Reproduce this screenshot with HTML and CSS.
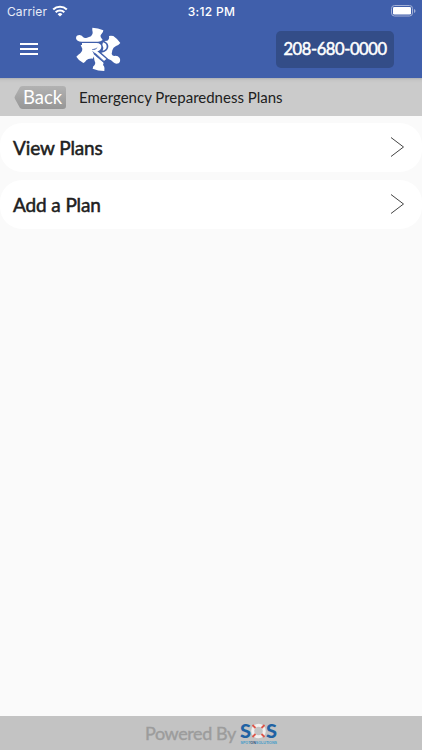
FILE: index.html
```html
<!DOCTYPE html>
<html lang="en">
<head>
    <meta charset="UTF-8">
    <meta name="viewport" content="width=device-width, initial-scale=1.0">
    <title>Emergency Preparedness Plans</title>
    <link rel="stylesheet" href="styles.css">
</head>
<body>
    <header>
        <div class="status-bar">
            <div class="carrier">
                <span>Carrier</span>
                <svg class="wifi" viewBox="0 0 16 12">
                    <path d="M1.2 4.6a9.7 9.7 0 0 1 13.6 0M3.7 7.2a6.2 6.2 0 0 1 8.6 0" fill="none" stroke="#fff" stroke-width="2.1"/>
                    <path d="M8 11.6L5.6 9.2a3.4 3.4 0 0 1 4.8 0z" fill="#fff"/>
                </svg>
            </div>
            <span class="time">3:12 PM</span>
            <svg class="battery" viewBox="0 0 25 12">
                <rect x="0.5" y="0.5" width="21" height="10.5" rx="3" fill="none" stroke="#a3b0d6"/>
                <rect x="2" y="2" width="18" height="7.5" rx="1.3" fill="#fff"/>
                <path d="M23 4v4q1.5-.7 1.5-2T23 4z" fill="#a3b0d6"/>
            </svg>
        </div>
        <div class="nav-bar">
            <button class="menu-btn" aria-label="Menu"><span></span><span></span><span></span></button>
            <svg class="logo" viewBox="0 0 168 162">
                <g fill="#fff">
                    <path d="M67 17Q84 17 100 25Q100 31 95 35Q90 39 92 45L98 54Q92 59 84 59H38Q20 60 18 49Q18 39 29 39Q37 40 39 45Q43 49 51 47L63 43Q69 38 68 31Q66 24 67 17Z"/>
                    <path d="M32 69H76Q85 72 79 79L66 82Q65 86 70 92L73 101L68 110Q54 109 49 115Q44 123 40 123Q26 116 19 104Q25 98 31 94Q38 87 37 80Z"/>
                    <path d="M36 63H80Q94 64 94 75Q93 85 82 88L109 111L101 118L72 91L62 83H75Q82 80 82 75Q80 71 75 71H36Z"/>
                    <path d="M71 97L101 122Q97 129 102 133Q105 139 103 147Q84 147 68 140Q68 133 74 129Q78 123 73 114Z"/>
                    <path d="M117 42Q122 40 130 42Q142 50 151 63Q145 70 138 72Q129 76 127 85L125 96Q127 102 133 102Q143 100 149 108Q153 118 146 124Q137 128 130 121Q124 114 115 111L94 92Q113 89 115 75Q116 63 103 57L112 56Q119 52 117 42Z"/>
                    <path d="M99 61Q110 64 110 74Q109 83 98 86Q102 76 97 68Z"/>
                </g>
                <path d="M76 94L102 118" fill="none" stroke="#405fab" stroke-width="2.5"/>
                <path d="M78 101L103 123" fill="none" stroke="#405fab" stroke-width="2" stroke-dasharray="2 1"/>
            </svg>
            <a class="phone" href="tel:208-680-0000">208-680-0000</a>
        </div>
    </header>
    <div class="title-bar">
        <button class="back-btn">
            <svg viewBox="0 0 53 25" preserveAspectRatio="none">
                <defs>
                    <linearGradient id="backFill" x1="0" y1="0" x2="0" y2="1">
                        <stop offset="0" stop-color="#b2b2b2"/>
                        <stop offset="1" stop-color="#969696"/>
                    </linearGradient>
                </defs>
                <path d="M6 2Q7 1 9 1H49Q52 1 52 4V21Q52 24 49 24H9Q7 24 6 23L1 14Q0 12.500 1 11Z" fill="url(#backFill)"/>
            </svg>
            <span>Back</span>
        </button>
        <h1>Emergency Preparedness Plans</h1>
    </div>
    <main>
        <a class="plan-row" href="#view">
            <span>View Plans</span>
            <svg class="arrow" viewBox="0 0 14 20"><path d="M1 .5L13.500 10L1 19.500"/></svg>
        </a>
        <a class="plan-row" href="#add">
            <span>Add a Plan</span>
            <svg class="arrow" viewBox="0 0 14 20"><path d="M1 .5L13.500 10L1 19.500"/></svg>
        </a>
    </main>
    <footer>
        <span class="powered">Powered By</span>
        <svg class="sos" viewBox="0 0 38 22">
            <text class="sos-letter" x="0" y="14.500" textLength="11" lengthAdjust="spacingAndGlyphs">S</text>
            <circle cx="18.500" cy="8" r="5.800" fill="none" stroke="#f1efee" stroke-width="3"/>
            <path d="M12.500 2L15.500 5M24.500 2L21.500 5M12.500 14L15.500 11M24.500 14L21.500 11" stroke="#dd5549" stroke-width="1.800"/>
            <text class="sos-letter" x="26" y="14.500" textLength="11" lengthAdjust="spacingAndGlyphs">S</text>
            <text class="sos-name" x="0.500" y="21" textLength="36.500" lengthAdjust="spacingAndGlyphs">SPOT<tspan>ON</tspan>SOLUTIONS</text>
        </svg>
    </footer>
</body>
</html>
```

FILE: styles.css
```css
* {
    box-sizing: border-box;
}

body {
    font-family: Lato, "Liberation Sans", sans-serif;
    margin: 0;
    height: 100vh;
    display: flex;
    flex-direction: column;
    background-color: #fafafa;
    color: #202020;
    overflow: hidden;
}

a {
    text-decoration: none;
    color: inherit;
}

button {
    border: none;
    background: none;
    padding: 0;
    font-family: inherit;
}

header {
    height: 78px;
    flex-shrink: 0;
    background-color: #405fab;
    color: white;
}

.status-bar {
    height: 22px;
    padding: 0 6px 0 7px;
    display: grid;
    grid-template-columns: 1fr auto 1fr;
    align-items: center;
    font-family: Inter, sans-serif;
    font-size: 12px;
}

.carrier {
    display: flex;
    align-items: center;
    gap: 5px;
    letter-spacing: 0.1px;
    color: #e8ecf7;
}

.wifi {
    width: 16px;
    height: 12px;
}

.time {
    font-weight: 500;
    letter-spacing: 0.3px;
}

.battery {
    width: 25px;
    height: 12px;
    justify-self: end;
}

.nav-bar {
    height: 54px;
    display: flex;
    align-items: center;
    padding: 0 28px 0 20px;
}

.menu-btn {
    width: 18px;
    display: flex;
    flex-direction: column;
    gap: 3px;
}

.menu-btn span {
    height: 2px;
    background-color: white;
}

.logo {
    width: 56px;
    height: 54px;
    margin-left: 32px;
}

.phone {
    width: 118px;
    height: 37px;
    margin-left: auto;
    line-height: 37px;
    text-align: center;
    background-color: #334d88;
    border-radius: 5px;
    font-size: 16.5px;
    letter-spacing: -0.4px;
    -webkit-text-stroke: 0.5px white;
}

.title-bar {
    height: 38px;
    flex-shrink: 0;
    display: flex;
    align-items: center;
    padding-left: 14px;
    background: linear-gradient(#aeb0b6, #c5c5c5 2px, #cbcbcb 5px);
}

.title-bar h1 {
    margin: 0 0 0 12px;
    font-size: 15px;
    font-weight: 400;
}

.back-btn {
    position: relative;
    width: 53px;
    height: 25px;
    color: white;
    font-size: 18.5px;
    line-height: 24px;
    text-align: left;
    padding-left: 9px;
}

.back-btn svg {
    position: absolute;
    left: 0;
    top: 0;
    width: 53px;
    height: 25px;
}

.back-btn span {
    position: relative;
}

main {
    flex-grow: 1;
    padding-top: 7px;
}

.plan-row {
    height: 49px;
    margin-bottom: 8px;
    padding: 0 18px 0 13px;
    display: flex;
    align-items: center;
    justify-content: space-between;
    background-color: white;
    border-radius: 22px;
    font-size: 19px;
    letter-spacing: -0.12px;
    -webkit-text-stroke: 0.5px #202020;
}

.arrow {
    width: 14px;
    height: 20px;
    margin-bottom: 1px;
}

.arrow path {
    fill: none;
    stroke: #444;
    stroke-width: 1;
}

footer {
    height: 34px;
    flex-shrink: 0;
    display: flex;
    align-items: center;
    padding-left: 145px;
    background-color: #c3c3c3;
}

.powered {
    width: 95px;
    font-size: 18px;
    letter-spacing: -0.4px;
    white-space: nowrap;
    color: #9c9c9c;
    -webkit-text-stroke: 0.4px #9c9c9c;
}

.sos {
    width: 38px;
    height: 22px;
    margin-top: 1px;
    overflow: visible;
}

.sos-letter {
    font-size: 18px;
    font-weight: 900;
    fill: #1f62a3;
}

.sos-name {
    font-family: "Liberation Sans", sans-serif;
    font-size: 4px;
    font-weight: bold;
    fill: #3e9bc9;
}

.sos-name tspan {
    fill: #264a75;
}
```
